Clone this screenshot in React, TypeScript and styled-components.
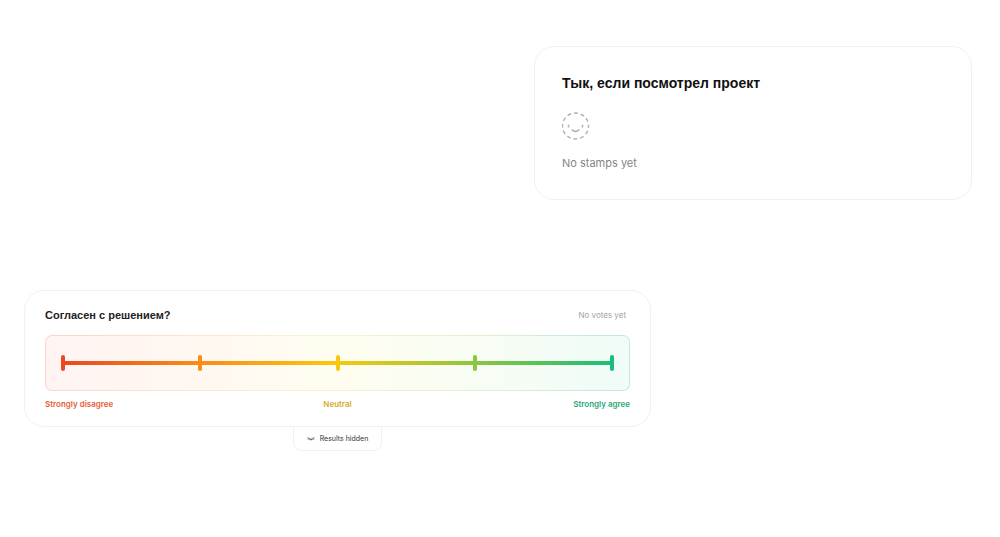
import React from "react";
import styled, { createGlobalStyle } from "styled-components";

const GlobalStyle = createGlobalStyle`
  *, *::before, *::after { box-sizing: border-box; }
  body {
    margin: 0;
    background: #fff;
    font-family: Inter, "Liberation Sans", sans-serif;
  }
`;

const Page = styled.main`
  display: flex;
  flex-direction: column;
  gap: 90px;
  padding: 46px 28px 46px 24px;
`;

const Row = styled.div<{ $columns: string }>`
  display: grid;
  grid-template-columns: ${(p) => p.$columns};
`;

const Card = styled.section<{ $padding: string }>`
  padding: ${(p) => p.$padding};
  border: 1px solid #f1f1f1;
  border-radius: 20px;
  background: #fff;
`;

const StampCard = styled(Card)`
  grid-column: 2;
  display: flex;
  flex-direction: column;
  align-items: flex-start;
`;

const Title = styled.h2<{ $size: number; $color: string }>`
  margin: 0;
  font-family: "Liberation Sans", Arial, sans-serif;
  font-size: ${(p) => p.$size}px;
  line-height: 20px;
  font-weight: 700;
  color: ${(p) => p.$color};
`;

const StampIcon = styled.svg`
  display: block;
  width: 28px;
  height: 28px;
  margin: 19px 0 14px;
`;

const StampStatus = styled.p`
  margin: 0;
  font-size: 11px;
  line-height: 18px;
  color: #858585;
`;

const Poll = styled.div`
  display: flex;
  flex-direction: column;
  align-items: center;
`;

const PollCard = styled(Card)`
  width: 100%;
`;

const PollHeader = styled.header`
  display: flex;
  align-items: center;
  justify-content: space-between;
  padding-right: 4px;
`;

const VoteCount = styled.span`
  font-size: 8px;
  line-height: 12px;
  color: #a3a3a3;
`;

const Scale = styled.div`
  margin-top: 10px;
  padding: 1px;
  border-radius: 7px;
  background: linear-gradient(90deg, #fbd5cd, #fdebcb 33%, #f6f3cf 50%, #dff0d0 75%, #bfe9dc);
`;

const ScaleInner = styled.div`
  display: flex;
  align-items: center;
  height: 54px;
  padding: 0 15px;
  border-radius: 6px;
  background: linear-gradient(90deg, #fff4f2, #fff8f1 28%, #fffdf0 50%, #f8fdf3 72%, #f0fcf8);
`;

const Track = styled.div`
  display: flex;
  flex: 1;
  align-items: center;
  justify-content: space-between;
  height: 16px;
  background: linear-gradient(90deg, #e8481f, #fb8c16 25%, #f9c80e 50%, #8bc63f 75%, #19bd79)
    center / 100% 4px no-repeat;
`;

const Tick = styled.button<{ $color: string }>`
  width: 4px;
  height: 16px;
  padding: 0;
  border: 0;
  border-radius: 2px;
  background: ${(p) => p.$color};
  cursor: pointer;
`;

const Labels = styled.div`
  display: grid;
  grid-template-columns: 1fr auto 1fr;
  margin-top: 7px;
`;

const Label = styled.span<{ $color: string; $align: string }>`
  font-size: 8px;
  line-height: 12px;
  font-weight: 600;
  text-align: ${(p) => p.$align};
  color: ${(p) => p.$color};
`;

const HiddenTab = styled.button`
  display: flex;
  align-items: center;
  justify-content: center;
  gap: 5px;
  height: 24px;
  padding: 0 13px;
  border: 1px solid #f1f1f1;
  border-top: 0;
  border-radius: 0 0 8px 8px;
  background: #fff;
  font-family: inherit;
  font-size: 7px;
  line-height: 12px;
  color: #333;
  cursor: pointer;
`;

const TICKS = [
  { name: "Strongly disagree", color: "#e8481f" },
  { name: "Disagree", color: "#fb8c16" },
  { name: "Neutral", color: "#f9c80e" },
  { name: "Agree", color: "#8bc63f" },
  { name: "Strongly agree", color: "#19bd79" },
];

export default function App() {
  return (
    <>
      <GlobalStyle />
      <Page>
        <Row $columns="510fr 438fr">
          <StampCard $padding="26px 28px 27px 27px">
            <Title $size={14} $color="#111">Тык, если посмотрел проект</Title>
            <StampIcon viewBox="0 0 28 28" fill="none" stroke="#b0b0b0" aria-hidden="true">
              <circle cx="13.5" cy="14" r="13" strokeWidth="1.4" strokeDasharray="4 2.807" strokeDashoffset="2" />
              <path d="M6.5 12.8v2.8M20.5 12.8v2.8M9.7 17.6q3.8 4 7.6 0" strokeWidth="1.5" />
            </StampIcon>
            <StampStatus>No stamps yet</StampStatus>
          </StampCard>
        </Row>
        <Row $columns="627fr 321fr">
          <Poll>
            <PollCard $padding="14px 20px 16px">
              <PollHeader>
                <Title $size={11} $color="#222">Согласен с решением?</Title>
                <VoteCount>No votes yet</VoteCount>
              </PollHeader>
              <Scale>
                <ScaleInner>
                  <Track>
                    {TICKS.map((t) => (
                      <Tick key={t.name} type="button" $color={t.color} aria-label={t.name} />
                    ))}
                  </Track>
                </ScaleInner>
              </Scale>
              <Labels>
                <Label $color="#e65c33" $align="left">Strongly disagree</Label>
                <Label $color="#d6ab2c" $align="center">Neutral</Label>
                <Label $color="#1fa874" $align="right">Strongly agree</Label>
              </Labels>
            </PollCard>
            <HiddenTab type="button">
              <svg width="8" height="6" viewBox="0 0 8 6" fill="none" stroke="#444" aria-hidden="true">
                <path d="M.6 1.4q3.4 3.6 6.8 0M1.8 2.4L1 3.7M3.2 3v1.3M4.8 3v1.3M6.2 2.4L7 3.7" strokeWidth=".8" />
              </svg>
              Results hidden
            </HiddenTab>
          </Poll>
        </Row>
      </Page>
    </>
  );
}
